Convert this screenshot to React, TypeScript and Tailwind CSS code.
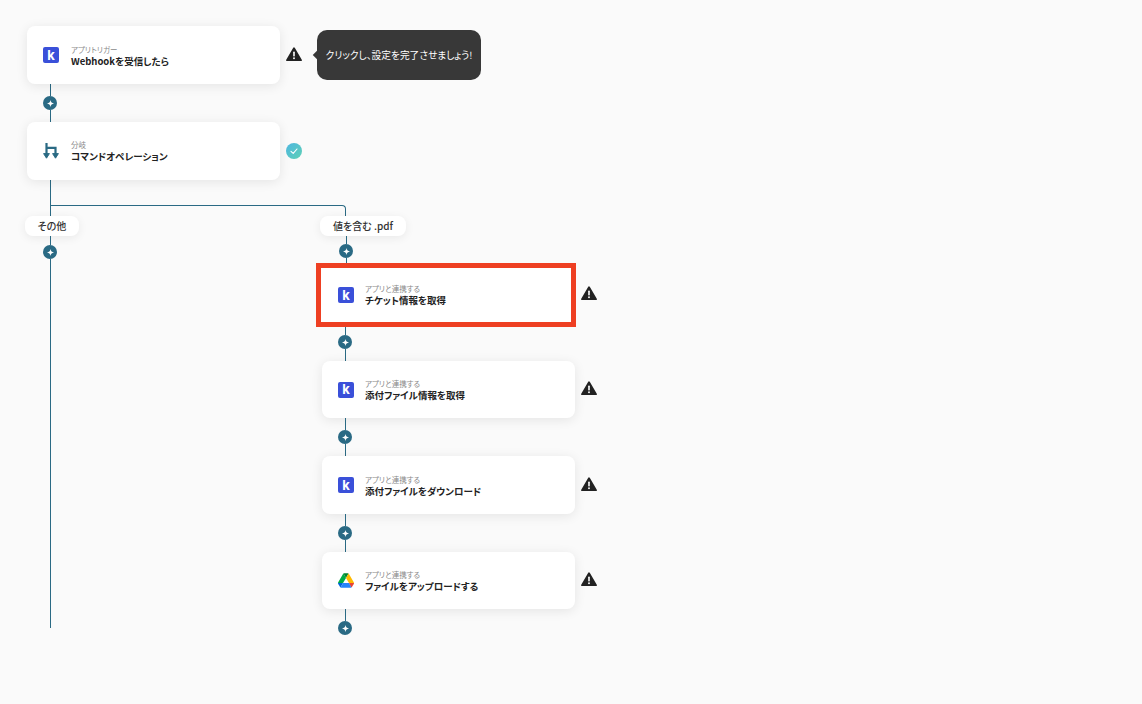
const fontStack = { fontFamily: '"Noto Sans CJK JP", "Noto Sans", sans-serif' };

function Warn({ ml = "ml-[6px]" }: { ml?: string }) {
  return (
    <svg width="16" height="15" viewBox="0 0 16 15" className={ml + " mb-[2px] shrink-0"}>
      <path d="M8 1.2 L15 13.2 H1 Z" fill="#222222" stroke="#222222" strokeWidth="1.8" strokeLinejoin="round" />
      <rect x="7.2" y="4.6" width="1.6" height="4.8" rx="0.6" fill="#ffffff" />
      <circle cx="8" cy="11.2" r="0.95" fill="#ffffff" />
    </svg>
  );
}

function Check() {
  return (
    <div className="ml-[6px] flex h-4 w-4 shrink-0 items-center justify-center rounded-full bg-gradient-to-br from-[#4fb6e0] to-[#5fd0b4]">
      <svg width="10" height="10" viewBox="0 0 10 10" fill="none">
        <path d="M2 5.3 L4.2 7.3 L8 3" stroke="#ffffff" strokeWidth="1.1" strokeLinecap="round" strokeLinejoin="round" />
      </svg>
    </div>
  );
}

function KLogo() {
  return (
    <div className="flex h-4 w-4 items-center justify-center rounded-[2px] bg-[#3a50d9] text-[13px] leading-none font-bold text-white" style={{ fontFamily: "Inter, sans-serif" }}>
      k
    </div>
  );
}

function BranchIcon() {
  return (
    <svg width="16" height="16" viewBox="0 0 16 16" fill="none">
      <path d="M3.5 0 V11 M2.5 4.8 H12.5 V11" stroke="#2a6a84" strokeWidth="2.2" />
      <path d="M0.6 10.6 H6.4 L3.5 15.2 Z M9.6 10.6 H15.4 L12.5 15.2 Z" fill="#2a6a84" stroke="#2a6a84" strokeWidth="1" strokeLinejoin="round" />
    </svg>
  );
}

function DriveIcon() {
  return (
    <svg width="17" height="15" viewBox="0 0 87.3 78">
      <path d="m6.6 66.85 3.85 6.65c.8 1.4 1.95 2.5 3.3 3.3l13.75-23.8h-27.5c0 1.55.4 3.1 1.2 4.5z" fill="#0066da" />
      <path d="m43.65 25-13.75-23.8c-1.35.8-2.5 1.9-3.3 3.3l-25.4 44a9.06 9.06 0 0 0 -1.2 4.5h27.5z" fill="#00ac47" />
      <path d="m73.55 76.8c1.35-.8 2.5-1.9 3.3-3.3l1.6-2.75 7.65-13.25c.8-1.4 1.2-2.95 1.2-4.5h-27.502l5.852 11.5z" fill="#ea4335" />
      <path d="m43.65 25 13.75-23.8c-1.35-.8-2.9-1.2-4.5-1.2h-18.5c-1.6 0-3.15.45-4.5 1.2z" fill="#00832d" />
      <path d="m59.8 53h-32.3l-13.75 23.8c1.35.8 2.9 1.2 4.5 1.2h50.8c1.6 0 3.15-.45 4.5-1.2z" fill="#2684fc" />
      <path d="m73.4 26.5-12.7-22c-.8-1.4-1.95-2.5-3.3-3.3l-13.75 23.8 16.15 28h27.45c0-1.55-.4-3.1-1.2-4.5z" fill="#ffba00" />
    </svg>
  );
}

function Dot() {
  return (
    <div className="flex h-[14px] w-[14px] shrink-0 items-center justify-center rounded-full bg-[#2a6a84]">
      <svg width="7" height="7" viewBox="0 0 6 6">
        <path d="M3 0 C3.4 1.9 4.1 2.6 6 3 C4.1 3.4 3.4 4.1 3 6 C2.6 4.1 1.9 3.4 0 3 C1.9 2.6 2.6 1.9 3 0 Z" fill="#ffffff" />
      </svg>
    </div>
  );
}

// vertical line with the round plus dot on it, top/bottom are the line lengths
function Connector({ top, bottom, className }: { top: string; bottom: string; className: string }) {
  return (
    <div className={"flex w-[14px] flex-col items-center " + className}>
      <div className={"w-px bg-[#2a6a84] " + top} />
      <Dot />
      <div className={"w-px bg-[#2a6a84] " + bottom} />
    </div>
  );
}

function Card({ sub, title, icon, red, h, gap = "gap-[11px]", nudge = "" }: { sub: string; title: string; icon: React.ReactNode; red?: boolean; h: string; gap?: string; nudge?: string }) {
  return (
    <div className={"flex shrink-0 items-center bg-white " + gap + " " + h + " " + (red ? "-ml-px w-[260px] border-[5px] border-[#ee3f22] pl-[17px]" : "w-[253px] rounded-lg pl-4 shadow-[0_2px_12px_rgba(0,0,0,0.09)]")}>
      <div className="flex w-4 justify-center">{icon}</div>
      <div className={"flex flex-col " + nudge}>
        <span className="text-[7.5px] leading-[11px] text-[#8a8a8a]">{sub}</span>
        <span className="text-[9.5px] leading-[13px] font-bold text-[#222222]">{title}</span>
      </div>
    </div>
  );
}

function Label({ text, className }: { text: string; className: string }) {
  return (
    <div className={"flex h-5 items-center justify-center rounded-lg bg-white pb-[2px] text-[10px] font-medium text-[#333333] shadow-[0_2px_10px_rgba(0,0,0,0.07)] " + className}>
      {text}
    </div>
  );
}

export default function App() {
  return (
    <div className="h-[704px] w-[1142px] overflow-hidden bg-[#fafafa] pt-[26px] pl-[27px] [font-feature-settings:'palt']" style={fontStack}>
      <div className="relative flex items-center">
        <Card sub="アプリトリガー" title="Webhookを受信したら" icon={<KLogo />} h="h-[58px]" gap="gap-3" nudge="pt-px" />
        <Warn />
        <div className="absolute top-[4px] left-[290px] flex h-[50px] w-[164px] items-center justify-center rounded-[10px] bg-[#383838] text-[9.7px] text-white">
          <div className="absolute top-[22px] left-[-3px] h-[6px] w-[6px] rotate-45 bg-[#383838]" />
          クリックし、設定を完了させましょう!
        </div>
      </div>
      <Connector top="h-[12px]" bottom="h-[12px]" className="ml-4" />
      <div className="flex items-center">
        <Card sub="分岐" title="コマンドオペレーション" icon={<BranchIcon />} h="h-[58px]" gap="gap-3" />
        <Check />
      </div>

      <div className="ml-[23px] h-[25px] w-px bg-[#2a6a84]" />
      <div className="ml-[23px] h-[11px] w-[296px] rounded-tr-[4px] border-x border-t border-[#2a6a84]" />

      <div className="-ml-[2px] flex">
        <div className="w-[292px] shrink-0">
          <Label text="その他" className="w-[54px]" />
          <Connector top="h-[9px]" bottom="h-[369px]" className="ml-[18px]" />
        </div>
        <div className="flex flex-col">
          <Label text="値を含む .pdf" className="ml-[3px] w-[86px]" />
          <Connector top="h-[8px]" bottom="h-[5px]" className="ml-[22px]" />
          <div className="flex items-center">
            <Card red sub="アプリと連携する" title="チケット情報を取得" icon={<KLogo />} h="h-[64px]" nudge="-mt-px" />
            <Warn ml="ml-[5px] -mt-[2px]" />
          </div>
          <Connector top="h-[8px]" bottom="h-[12px]" className="ml-[21px]" />
          <div className="ml-[5px] flex items-center">
            <Card sub="アプリと連携する" title="添付ファイル情報を取得" icon={<KLogo />} h="h-[57px]" nudge="pt-px" />
            <Warn />
          </div>
          <Connector top="h-[12px]" bottom="h-[12px]" className="ml-[21px]" />
          <div className="ml-[5px] flex items-center">
            <Card sub="アプリと連携する" title="添付ファイルをダウンロード" icon={<KLogo />} h="h-[58px]" nudge="pt-px" />
            <Warn />
          </div>
          <Connector top="h-[12px]" bottom="h-[12px]" className="ml-[21px]" />
          <div className="ml-[5px] flex items-center">
            <Card sub="アプリと連携する" title="ファイルをアップロードする" icon={<DriveIcon />} h="h-[57px]" />
            <Warn />
          </div>
          <Connector top="h-[12px]" bottom="h-0" className="ml-[21px]" />
        </div>
      </div>
    </div>
  );
}
